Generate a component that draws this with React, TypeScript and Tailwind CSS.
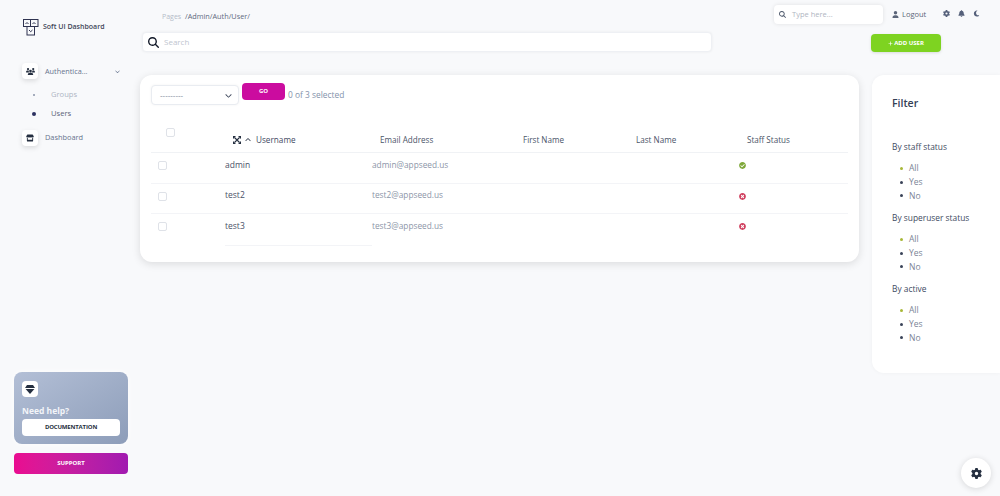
import { FaCheckCircle, FaTimesCircle } from "react-icons/fa";
import { FaUsers, FaStore, FaUser, FaGear, FaBell, FaMoon, FaMagnifyingGlass, FaChevronUp, FaChevronDown, FaPlus } from "react-icons/fa6";

const COLS = "grid grid-cols-[74px_147px_143px_113px_111px_109px]";

const Logo = () => (
  <svg width="16" height="17" viewBox="0 0 16 17" fill="none" stroke="#2f3350" strokeWidth="1">
    <rect x="0.5" y="0.5" width="7" height="7" />
    <rect x="7.5" y="0.5" width="7.5" height="7" />
    <rect x="4" y="7.5" width="7.5" height="8.5" />
    <path d="M2.5 5 4 3.5 5.5 5M9.5 5 11 3.5 12.5 5M6 11l1.7 1.7L9.5 11" />
  </svg>
);

const Gem = () => (
  <svg width="10" height="9" viewBox="0 0 10 9" fill="#252f40">
    <path d="M2 0h6l2 3H0z" />
    <path d="M.6 4h8.8L5 9z" />
  </svg>
);

const Expand = () => (
  <svg width="8" height="8" viewBox="0 0 8 8" fill="#252f40" stroke="#252f40" className="mt-[2px] shrink-0">
    <path d="M1.5 1.5 6.5 6.5M6.5 1.5 1.5 6.5" strokeWidth="1.1" />
    <path d="M0 0h3L0 3zM8 0v3L5 0zM0 8V5l3 3zM8 8H5l3-3z" strokeWidth="0" />
  </svg>
);

const rows = [
  { name: "admin", email: "admin@appseed.us", ok: true },
  { name: "test2", email: "test2@appseed.us", ok: false },
  { name: "test3", email: "test3@appseed.us", ok: false },
];

const filters = ["By staff status", "By superuser status", "By active"];

function NavIcon({ children }: { children: React.ReactNode }) {
  return (
    <div className="w-4 h-4 rounded bg-white shadow-[0_2px_5px_rgba(0,0,0,0.12)] flex items-center justify-center text-[#252f40] shrink-0">
      {children}
    </div>
  );
}

function Sidebar() {
  return (
    <aside className="w-[140px] h-[496px] shrink-0 flex flex-col pl-[14px] pr-3 pb-[22px]">
      <div className="flex items-center gap-[4px] pl-[9px] pt-[18px] h-[36px]">
        <Logo />
        <span className="text-[7px] font-semibold text-[#3f4659] whitespace-nowrap">Soft UI Dashboard</span>
      </div>
      <div className="pl-2 mt-[27px] flex items-center h-4">
        <NavIcon><FaUsers size={9} /></NavIcon>
        <span className="ml-[7px] text-[7.3px] text-[#67748e]">Authentica...</span>
        <FaChevronDown size={5} className="ml-auto mr-[8px] text-[#67748e]" />
      </div>
      <div className="mt-[6px] pl-[19px] flex flex-col">
        <div className="h-[19px] flex items-center">
          <span className="w-[2px] h-[2px] rounded-full bg-[#8a93a8]" />
          <span className="ml-[16px] text-[7.6px] text-[#aeb5c3]">Groups</span>
        </div>
        <div className="h-[19px] flex items-center">
          <span className="w-1 h-1 -ml-[1px] rounded-full bg-[#2c3160]" />
          <span className="ml-[15px] text-[7.6px] text-[#5a6478]">Users</span>
        </div>
      </div>
      <div className="pl-2 mt-[7px] flex items-center h-4">
        <NavIcon><FaStore size={8} /></NavIcon>
        <span className="ml-[7px] text-[7.4px] text-[#67748e]">Dashboard</span>
      </div>
      <div className="mt-auto w-[114px] h-[72px] rounded-lg bg-gradient-to-br from-[#b3bfd6] to-[#8d9db9] px-2 pt-[9px] flex flex-col shadow-[0_0_6px_rgba(255,255,255,0.9)]">
        <div className="w-4 h-4 rounded bg-white flex items-center justify-center">
          <Gem />
        </div>
        <span className="mt-[8px] text-[8.5px] leading-[12px] font-bold text-[#f3f5f9]">Need help?</span>
        <div className="mt-[2px] h-[17px] rounded bg-white flex items-center justify-center text-[6px] font-bold text-[#252f40] tracking-tight">
          DOCUMENTATION
        </div>
      </div>
      <div className="mt-[9px] w-[114px] h-[21px] rounded bg-gradient-to-r from-[#ea0b90] to-[#a11ab0] flex items-center justify-center text-[6px] font-bold text-white">
        SUPPORT
      </div>
    </aside>
  );
}

function TopBar() {
  return (
    <header className="flex items-start h-[32px] pr-[20px]">
      <div className="ml-[22px] mt-[11px] text-[7px] leading-[11px] text-[#b4bbc8] whitespace-nowrap">
        Pages <span className="ml-[2px] text-[7.3px] text-[#5f6a80]">/Admin/Auth/User/</span>
      </div>
      <div className="ml-auto mt-[5px] w-[109px] h-[19px] bg-white rounded shadow-[0_0_4px_rgba(0,0,0,0.1)] flex items-center pl-[5px] text-[7.5px]">
        <FaMagnifyingGlass size={7} className="text-[#4a5568]" />
        <span className="ml-[6px] text-[#b0b6c2]">Type here...</span>
      </div>
      <div className="ml-[9px] mt-[9px] w-[35px] flex items-center text-[7.5px] leading-[11px] text-[#5b6579] shrink-0">
        <FaUser size={7} className="text-[#5b6579]" />
        <span className="ml-[3px]">Logout</span>
      </div>
      <div className="ml-[16px] mt-[10px] flex items-center gap-[8px] text-[#55607a]">
        <FaGear size={7} />
        <FaBell size={7} />
        <FaMoon size={7} />
      </div>
    </header>
  );
}

function SearchRow() {
  return (
    <div className="flex items-start h-[43px] pr-[59px]">
      <div className="ml-[2px] w-[570px] h-5 bg-white rounded border border-[#eef0f4] shadow-[0_0_3px_rgba(0,0,0,0.06)] flex items-center pl-[5px]">
        <FaMagnifyingGlass size={11} className="text-[#111827]" />
        <span className="ml-[5px] text-[8px] text-[#c0c5cf]">Search</span>
      </div>
      <button className="ml-auto mt-[2px] w-[70px] h-[18px] rounded bg-[#7ed321] text-white text-[6px] font-bold flex items-center justify-center gap-[1px] shadow-[0_1px_3px_rgba(0,0,0,0.12)]">
        <FaPlus size={5} />ADD USER
      </button>
    </div>
  );
}

function Check() {
  return <span className="block w-[9px] h-[9px] rounded-[2px] bg-white border border-[#dfe2e8]" />;
}

function MainCard() {
  return (
    <section className="w-[719px] h-[187px] bg-white rounded-xl shadow-[0_2px_8px_rgba(0,0,0,0.12)] pl-[11px] pr-[11px] pt-2">
      <div className="flex items-start h-[34px]">
        <div className="mt-[2px] w-[88px] h-5 rounded bg-white border border-[#e9ecf1] shadow-[0_0_3px_rgba(0,0,0,0.05)] flex items-center pl-2 pr-1.5">
          <span className="text-[8px] text-[#7b8496]">---------</span>
          <FaChevronDown size={7} className="ml-auto text-[#3a4358]" />
        </div>
        <button className="ml-[3px] w-[43px] h-[17px] rounded bg-[#cb0c9f] text-white text-[6px] font-bold flex items-center justify-center">GO</button>
        <span className="ml-[3px] mt-[6px] text-[8.4px] leading-[12px] text-[#8392ab] whitespace-nowrap">0 of 3 selected</span>
      </div>
      <div className={COLS + " h-[36px] border-b border-[#f0f2f5]"}>
        <div className="pl-[15px] pt-[11px]"><Check /></div>
        <div className="pl-2 pt-[17px] flex items-start text-[8.2px] leading-[12px] font-medium text-[#3f4a63]">
          <Expand />
          <FaChevronUp size={6} className="ml-[4px] mt-[3px] text-[#252f40]" />
          <span className="ml-[5px]">Username</span>
        </div>
        {["Email Address", "First Name", "Last Name", "Staff Status"].map((h) => (
          <div key={h} className="pl-2 pt-[17px] text-[8.1px] leading-[12px] font-medium text-[#4a5468] whitespace-nowrap">{h}</div>
        ))}
      </div>
      {rows.map((r, i) => (
        <div key={r.name} className={COLS + " h-[30.5px] items-start" + (i < 2 ? " border-b border-[#f3f4f7]" : "")}>
          <div className="pl-[7px] pt-2"><Check /></div>
          <div className="pt-[5.5px] text-[8.5px] leading-[12px] font-medium text-[#4a5268]">{r.name}</div>
          <div className="pt-[5.5px] text-[8.3px] leading-[12px] text-[#8c95a8] whitespace-nowrap">{r.email}</div>
          <div />
          <div />
          <div className="pt-[9px]">
            {r.ok ? <FaCheckCircle size={7} className="text-[#7fa83a]" /> : <FaTimesCircle size={7} className="text-[#d0405f]" />}
          </div>
        </div>
      ))}
      <div className="ml-[74px] w-[147px] border-t border-[#f3f4f7]" />
    </section>
  );
}

function FilterCard() {
  return (
    <aside className="w-[128px] h-[298px] bg-white rounded-l-xl pl-5 pt-[21px] shadow-[0_0_4px_rgba(0,0,0,0.04)]">
      <h3 className="text-[10.5px] leading-[14px] font-semibold text-[#344055]">Filter</h3>
      <div className="mt-[30px]">
        {filters.map((f) => (
          <div key={f} className="mb-[8.2px]">
            <div className="text-[8.4px] leading-[14px] font-medium text-[#414b62] whitespace-nowrap">{f}</div>
            <ul className="mt-2 pl-[8px]">
              {["All", "Yes", "No"].map((o, i) => (
                <li key={o} className="h-[13.6px] flex items-center text-[8.5px] text-[#7b8496]">
                  <span className={"w-[3px] h-[3px] rounded-full " + (i === 0 ? "bg-[#a8b838]" : "bg-[#3a4358]")} />
                  <span className="ml-[6px]">{o}</span>
                </li>
              ))}
            </ul>
          </div>
        ))}
      </div>
    </aside>
  );
}

export default function App() {
  return (
    <div className="relative w-[1000px] h-[496px] overflow-hidden bg-[#f8f9fb] flex font-['Open_Sans',sans-serif]">
      <Sidebar />
      <main className="flex-1 min-w-0">
        <TopBar />
        <SearchRow />
        <div className="flex items-start gap-[13px]">
          <MainCard />
          <FilterCard />
        </div>
      </main>
      <button className="absolute left-[961px] top-[458px] w-[30px] h-[30px] rounded-full bg-white shadow-[0_1px_6px_rgba(0,0,0,0.14)] flex items-center justify-center text-[#252f40]">
        <FaGear size={11} />
      </button>
    </div>
  );
}
